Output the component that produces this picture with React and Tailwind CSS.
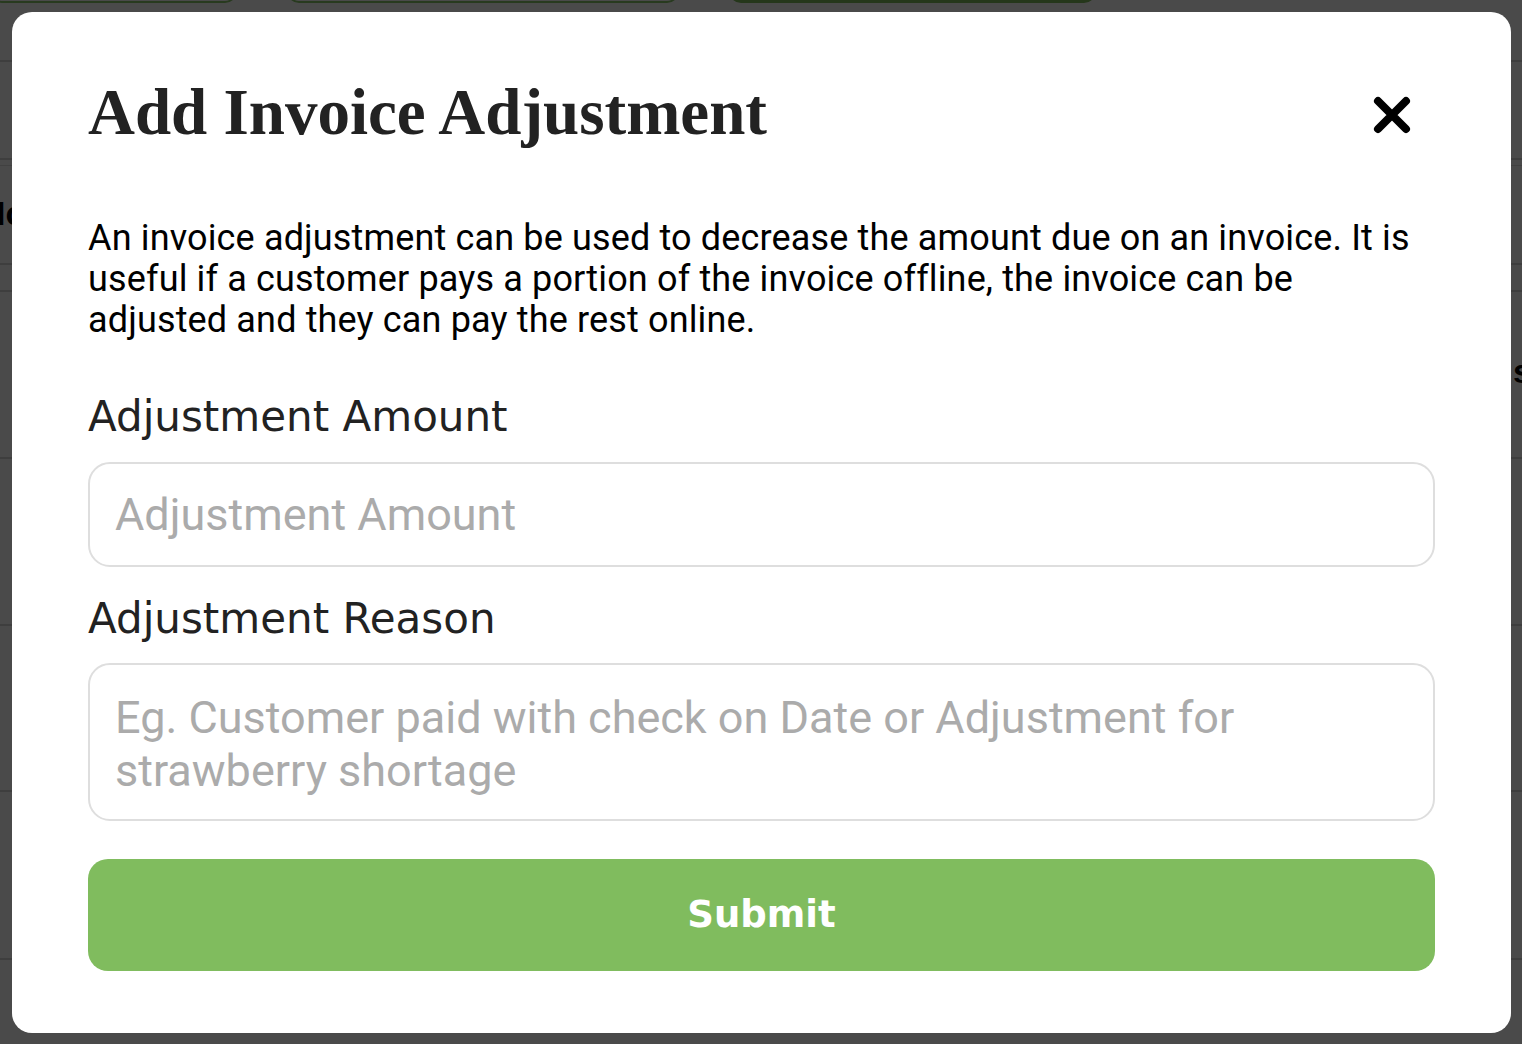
import { useState } from "react";

const serif = { fontFamily: '"Liberation Serif", "Times New Roman", serif' };
const sans = { fontFamily: 'Roboto, "Liberation Sans", sans-serif' };
const wide = { fontFamily: '"DejaVu Sans", sans-serif' };

const CloseIcon = () => (
    <svg width="40" height="40" viewBox="0 0 40 40" fill="none">
        <path d="M6 6 L34 34 M34 6 L6 34" stroke="#000" strokeWidth="8" strokeLinecap="round" />
    </svg>
);

// page that sits under the dark overlay, only its edges show through
const BackgroundPage = () => (
    <div className="w-full">
        <div className="flex h-[44px] -mt-[41px] gap-[50px] -ml-[10px]">
            <div className="w-[247px] rounded-[12px] border-2 border-[#8ac86b]" />
            <div className="w-[392px] rounded-[12px] border-2 border-[#8ac86b]" />
            <div className="w-[367px] rounded-[12px] bg-[#80bc5e]" />
        </div>
        <div className="h-[59px] border-b-2 border-[#d6d6d6]" />
        <div className="h-[98px] border-b-2 border-[#d6d6d6]" />
        <div className="h-[6px] border-b border-[#e0e0e0]" />
        <div className="h-[99px] border-b-2 border-[#d6d6d6] pt-[30px] -ml-[4px]">
            <span className="text-[34px] font-bold leading-none text-black" style={{ fontFamily: '"Liberation Sans", Arial, sans-serif' }}>Ic</span>
        </div>
        <div className="h-[27px] border-b-2 border-[#d6d6d6]" />
        <div className="h-[167px] border-b-2 border-[#d6d6d6] flex justify-end pt-[62px] -mr-[10px]">
            <span className="text-[34px] font-bold leading-none text-black" style={{ fontFamily: '"Liberation Sans", Arial, sans-serif' }}>s</span>
        </div>
        <div className="h-[167px] border-b-2 border-[#d6d6d6]" />
        <div className="h-[166px] border-b-2 border-[#d6d6d6]" />
        <div className="h-[168px] border-b-2 border-[#d6d6d6]" />
    </div>
);

export default function App() {
    const [amount, setAmount] = useState('');
    const [reason, setReason] = useState('');

    return (
        <div className="relative h-[1044px] w-full overflow-hidden bg-white">
            <BackgroundPage />

            {/* Modal overlay */}
            <div className="absolute inset-0 flex bg-black/[0.71] p-[12px] pr-[11px] pb-[11px]">
                <div className="flex w-full flex-col rounded-[20px] bg-white px-[76px] pt-[69px]">
                    <div className="flex items-start justify-between">
                        <h1 className="text-[65px] font-bold leading-[62px] text-[#222]" style={serif}>
                            Add Invoice Adjustment
                        </h1>
                        <button className="mt-[14px] mr-[23px]">
                            <CloseIcon />
                        </button>
                    </div>

                    <p className="mt-[75px] max-w-[1335px] text-[36px] leading-[41px] tracking-[0.15px] text-black" style={sans}>
                        An invoice adjustment can be used to decrease the amount due on an invoice. It is useful if a customer pays a portion of the invoice offline, the invoice can be adjusted and they can pay the rest online.
                    </p>

                    <label className="mt-[52px] text-[42px] leading-[48px] text-[#222]" style={wide}>
                        Adjustment Amount
                    </label>
                    <input
                        value={amount}
                        onChange={e => setAmount(e.target.value)}
                        placeholder="Adjustment Amount"
                        className="mt-[21px] h-[105px] w-full rounded-[22px] border-2 border-[#dedede] px-[25px] text-[45px] leading-[53px] text-black outline-none placeholder:text-[#ababab]"
                        style={sans}
                    />

                    <label className="mt-[28px] text-[42px] leading-[48px] text-[#222]" style={wide}>
                        Adjustment Reason
                    </label>
                    <textarea
                        value={reason}
                        onChange={e => setReason(e.target.value)}
                        placeholder="Eg. Customer paid with check on Date or Adjustment for strawberry shortage"
                        className="mt-[20px] h-[158px] w-full resize-none rounded-[22px] border-2 border-[#dedede] px-[25px] pt-[26px] pb-[23px] text-[45px] leading-[53px] text-black outline-none placeholder:text-[#ababab]"
                        style={sans}
                    />

                    <button
                        className="mt-[38px] h-[112px] w-full rounded-[20px] bg-[#80bc5e] text-[37px] font-semibold text-white"
                        style={wide}
                    >
                        Submit
                    </button>
                </div>
            </div>
        </div>
    );
}
